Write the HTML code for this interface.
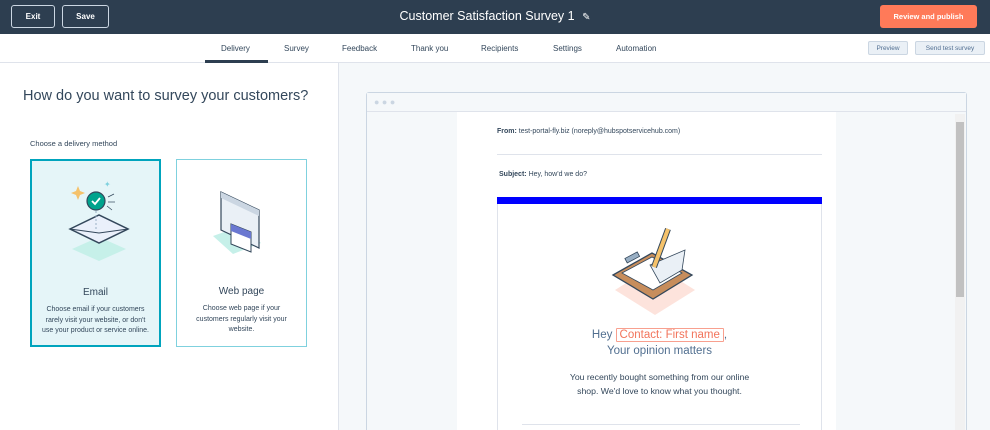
<!DOCTYPE html>
<html style="width:990px;height:430px;overflow:hidden"><head><style>
*{margin:0;padding:0;box-sizing:border-box}
body{width:990px;height:430px;overflow:hidden;font-family:"Liberation Sans",sans-serif;background:#fff;position:relative;color:#33475b}
.abs{position:absolute}
.top{left:0;top:0;width:990px;height:34px;background:#2d3e50}
.btn{position:absolute;top:5px;height:23px;border:1px solid #cbd6e2;border-radius:3px;color:#fff;font-size:8px;font-weight:bold;display:flex;align-items:center;justify-content:center}
.tabs{left:0;top:34px;width:990px;height:29px;background:#fff;border-bottom:1px solid #dfe3eb}
.tab{position:absolute;top:44px;font-size:8px;color:#33475b}
.sbtn{position:absolute;top:41px;height:14px;background:#eaf0f6;border:1px solid #cbd6e2;border-radius:2px;font-size:6.5px;color:#506e91;display:flex;align-items:center;justify-content:center}
.card{position:absolute;top:159px;width:131px;height:188px;text-align:center}
.card h4{position:absolute;top:126px;width:100%;font-weight:normal;font-size:10px}
.card p{position:absolute;top:144px;left:8px;right:8px;font-size:7px;line-height:10.5px;color:#33475b}
</style></head><body>
<div class="abs top"></div>
<div class="btn" style="left:11px;width:44px">Exit</div>
<div class="btn" style="left:62px;width:47px">Save</div>
<div class="abs" style="left:0;width:990px;top:9px;text-align:center;color:#fff;font-size:12.5px">Customer Satisfaction Survey 1 <span style="font-size:10px;margin-left:4px">✎</span></div>
<div class="abs" style="left:880px;top:5px;width:97px;height:23px;background:#ff7a59;border-radius:3px;color:#fff;font-size:7.5px;font-weight:bold;display:flex;align-items:center;justify-content:center">Review and publish</div>
<div class="abs tabs"></div>
<div class="tab" style="left:221px">Delivery</div>
<div class="abs" style="left:205px;top:60px;width:63px;height:3px;background:#2d3e50"></div>
<div class="tab" style="left:284px">Survey</div>
<div class="tab" style="left:342px">Feedback</div>
<div class="tab" style="left:411px">Thank you</div>
<div class="tab" style="left:481px">Recipients</div>
<div class="tab" style="left:553px">Settings</div>
<div class="tab" style="left:616px">Automation</div>
<div class="sbtn" style="left:868px;width:40px">Preview</div>
<div class="sbtn" style="left:915px;width:70px">Send test survey</div>
<div class="abs" style="left:338px;top:63px;width:652px;height:367px;background:#f5f8fa;border-left:1px solid #dfe3eb"></div>
<div class="abs" style="left:23px;top:88px;font-size:14.5px;color:#33475b">How do you want to survey your customers?</div>
<div class="abs" style="left:30px;top:139px;font-size:7.5px;color:#33475b">Choose a delivery method</div>
<div class="card" style="left:30px;background:#e5f5f8;border:2px solid #00a4bd">
<svg class="abs" style="left:32px;top:14px" width="70" height="90" viewBox="0 0 70 90">
<polygon points="8,74 35,62 62,74 35,86" fill="#c6f0e9"/>
<polygon points="6,54 35,40 64,54 35,68" fill="#eaf0fb" stroke="#33475b" stroke-width="1.5"/>
<polyline points="6,54 35,58 64,54" fill="none" stroke="#33475b" stroke-width="1"/>
<line x1="32" y1="32" x2="32" y2="56" stroke="#99afc4" stroke-dasharray="2 2"/>
<circle cx="32" cy="26" r="9" fill="#00a38d" stroke="#33475b" stroke-width="1.2"/>
<polyline points="28,26 31,29 36,23" fill="none" stroke="#fff" stroke-width="1.8"/>
<path d="M12 16l2 -5 2 5 5 2 -5 2 -2 5 -2 -5 -5 -2z" fill="#f5c26b"/>
<text x="40" y="12" font-size="8" fill="#7fd1de">✦</text>
<line x1="44" y1="22" x2="50" y2="19" stroke="#33475b" stroke-width=".7"/><line x1="44" y1="27" x2="51" y2="27" stroke="#33475b" stroke-width=".7"/><line x1="43" y1="31" x2="48" y2="35" stroke="#33475b" stroke-width=".7"/>
</svg>
<h4>Email</h4><p>Choose email if your customers rarely visit your website, or don't use your product or service online.</p></div>
<div class="card" style="left:176px;border:1px solid #7fd1de;background:#fff">
<svg class="abs" style="left:34px;top:28px" width="65" height="70" viewBox="0 0 65 70">
<polygon points="2,48 30,38 50,55 22,66" fill="#c6f0e9"/>
<polygon points="10,4 48,22 48,60 10,42" fill="#eaf0f6" stroke="#33475b" stroke-width="1.2"/>
<polygon points="10,4 48,22 48,28 10,10" fill="#cbd6e2"/>
<polygon points="20,36 40,44 40,64 20,56" fill="#fff" stroke="#33475b" stroke-width="1"/>
<polygon points="20,36 40,44 40,51 20,43" fill="#6a78d1"/>
</svg>
<h4>Web page</h4><p style="left:15px;right:15px">Choose web page if your customers regularly visit your website.</p></div>
<div class="abs" style="left:366px;top:92px;width:601px;height:338px;border:1px solid #cbd6e2;border-bottom:none;border-radius:3px 3px 0 0;background:#f5f8fa"></div>
<div class="abs" style="left:367px;top:93px;width:599px;height:19px;border-bottom:1px solid #dfe3eb;background:#f5f8fa"></div>
<div class="abs" style="left:374px;top:97px;font-size:9px;color:#cbd6e2">● ● ●</div>
<div class="abs" style="left:457px;top:112px;width:379px;height:318px;background:#fff"></div>
<div class="abs" style="left:955px;top:114px;width:10px;height:316px;background:#f1f1f1"></div>
<div class="abs" style="left:956px;top:122px;width:8px;height:175px;background:#c1c1c1"></div>
<div class="abs" style="left:497px;top:128px;font-size:7px;color:#33475b"><b>From:</b> test-portal-fly.biz (noreply@hubspotservicehub.com)</div>
<div class="abs" style="left:497px;top:154px;width:325px;height:1px;background:#dfe3eb"></div>
<div class="abs" style="left:499px;top:171px;font-size:7px"><b>Subject:</b> Hey, how'd we do?</div>
<div class="abs" style="left:497px;top:197px;width:325px;height:7px;background:#0000ff"></div>
<div class="abs" style="left:497px;top:204px;width:325px;height:226px;border-left:1px solid #dfe3eb;border-right:1px solid #dfe3eb"></div>
<svg class="abs" style="left:610px;top:225px" width="90" height="95" viewBox="0 0 90 95">
<polygon points="5,65 45,40 85,65 45,90" fill="#fde3dc"/>
<polygon points="3,50 42,28 82,50 43,74" fill="#c78d5c" stroke="#33475b" stroke-width="1.3"/>
<polygon points="12,48 42,32 72,48 43,65" fill="#fff" stroke="#33475b" stroke-width=".8"/>
<polygon points="40,40 75,25 72,45 50,58" fill="#eaf0f6" stroke="#33475b" stroke-width=".8"/>
<rect x="15" y="30" width="14" height="5" transform="rotate(-28 22 32)" fill="#99afc4" stroke="#33475b" stroke-width=".8"/>
<line x1="44" y1="42" x2="58" y2="4" stroke="#33475b" stroke-width="6"/>
<line x1="44" y1="42" x2="58" y2="4" stroke="#f5c26b" stroke-width="4"/>
</svg>
<div class="abs" style="left:497px;width:325px;top:329px;text-align:center;font-size:11.5px;color:#516f90">Hey <span style="border:1px solid #f8a08f;color:#f2745b;background:#fff;padding:0 3px;border-radius:1px">Contact: First name</span>,</div>
<div class="abs" style="left:497px;width:325px;top:345px;text-align:center;font-size:11.5px;color:#516f90">Your opinion matters</div>
<div class="abs" style="left:517px;width:285px;top:370px;text-align:center;font-size:8.7px;line-height:14px;color:#33475b">You recently bought something from our online<br>shop. We'd love to know what you thought.</div>
<div class="abs" style="left:522px;top:424px;width:278px;height:1px;background:#dfe3eb"></div>
</body></html>
